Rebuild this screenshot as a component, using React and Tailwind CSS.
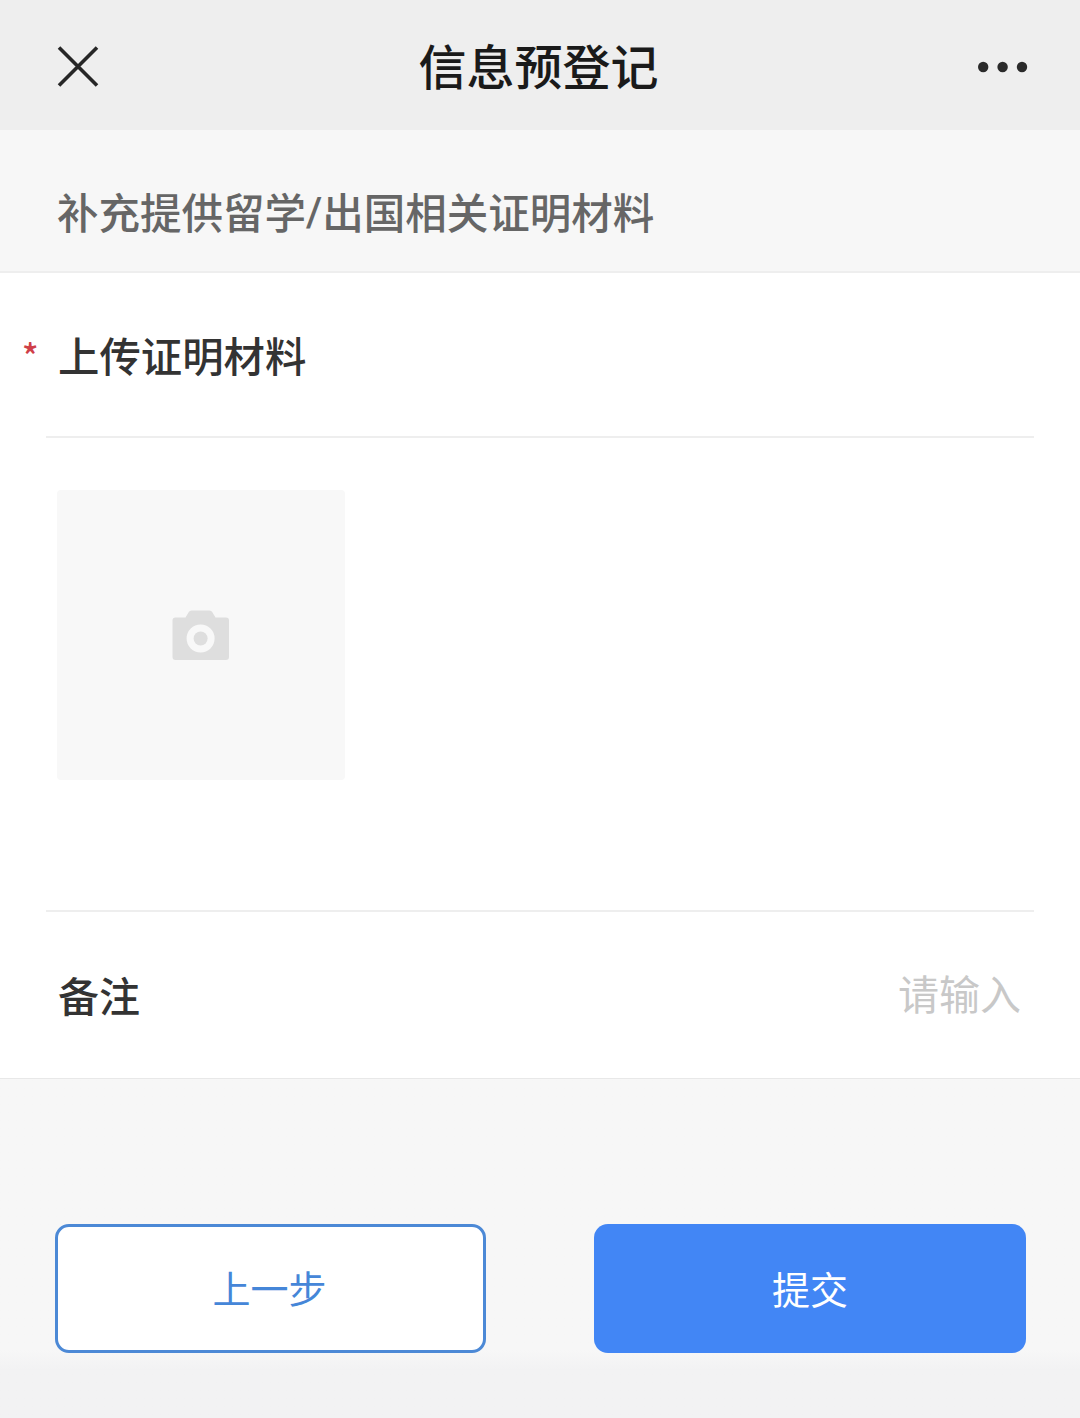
function CloseIcon() {
  return (
    <svg viewBox="0 0 42 42" className="h-[42px] w-[42px]" fill="none" stroke="#262626" strokeWidth="3.6">
      <path d="M2 1.500l38 38M40 1.500l-38 38" />
    </svg>
  );
}

function MoreIcon() {
  return (
    <svg viewBox="0 0 50 12" className="h-3 w-[50px]" fill="#2a2a2a">
      <circle cx="5.2" cy="6" r="5.2" />
      <circle cx="24.6" cy="6" r="5.2" />
      <circle cx="44" cy="6" r="5.2" />
    </svg>
  );
}

function CameraIcon() {
  return (
    <svg viewBox="0 0 58 50" className="h-[50px] w-[58px]">
      <path
        fill="#dedede"
        fillRule="evenodd"
        d="M19.5 0.5h18q1.8 0 2.7 1.5L43.5 7.5H54q3 0 3 3v36.5q0 3-3 3H3.500q-3 0-3-3V10.500q0-3 3-3H13.500l3.300-5.500Q17.700 0.500 19.500 0.500zM28.600 14.500a14 14 0 1 0 0 28a14 14 0 1 0 0-28z"
      />
      <circle cx="28.6" cy="28.5" r="7" fill="#dedede" />
    </svg>
  );
}

export default function App() {
  return (
    <div className="flex h-[1418px] w-[1080px] flex-col bg-[#f7f7f7] font-['Noto_Sans_CJK_SC',sans-serif] leading-none">
      <header className="flex h-[130px] items-center justify-between bg-[#eeeeee] pt-[3px] pr-[52px] pl-[57px]">
        <CloseIcon />
        <h1 className="pb-[6px] text-[48px] font-medium text-[#1a1a1a]">信息预登记</h1>
        <MoreIcon />
      </header>

      <h2 className="flex h-[143px] items-center border-b-2 border-[#eeeeee] pt-[22px] pl-[57px] text-[41.5px] font-medium text-[#666666]">
        补充提供留学<span className="font-[Roboto] leading-none">/</span>出国相关证明材料
      </h2>

      <main className="h-[806px] border-b border-[#e8e8e8] bg-white px-[46px]">
        <div className="flex h-[165px] items-center border-b-2 border-[#eeeeee] pt-px text-[41.4px] font-medium text-[#333333]">
          <span className="-ml-6 w-9 text-[34px] font-medium text-[#cf4048]">*</span>
          上传证明材料
        </div>
        <div className="h-[474px] border-b-2 border-[#eeeeee] pt-[52px] pl-[11px]">
          <button type="button" aria-label="上传照片" className="flex h-[290px] w-[288px] items-center justify-center rounded-[4px] bg-[#f8f8f8]">
            <CameraIcon />
          </button>
        </div>
        <label className="flex h-[166px] items-center justify-between pb-px pl-3 text-[41px] font-medium text-[#333333]">
          备注
          <input
            placeholder="请输入"
            className="w-[400px] pr-[13px] pb-[5px] text-right font-normal outline-none placeholder:text-[#c8c8c8]"
          />
        </label>
      </main>

      <footer className="flex flex-1 justify-between bg-linear-to-b from-[#f7f7f7] from-80% to-[#f2f2f3] to-86% pt-[145px] pr-[54px] pl-[55px] text-[38px]">
        <button type="button" className="h-[129px] w-[431px] rounded-[14px] border-[3px] border-[#4c89d6] bg-white pr-[2px] pb-[3px] text-[#4586d8]">
          上一步
        </button>
        <button type="button" className="h-[129px] w-[432px] rounded-[14px] bg-[#4286f5] pb-[2px] text-white">
          提交
        </button>
      </footer>
    </div>
  );
}
